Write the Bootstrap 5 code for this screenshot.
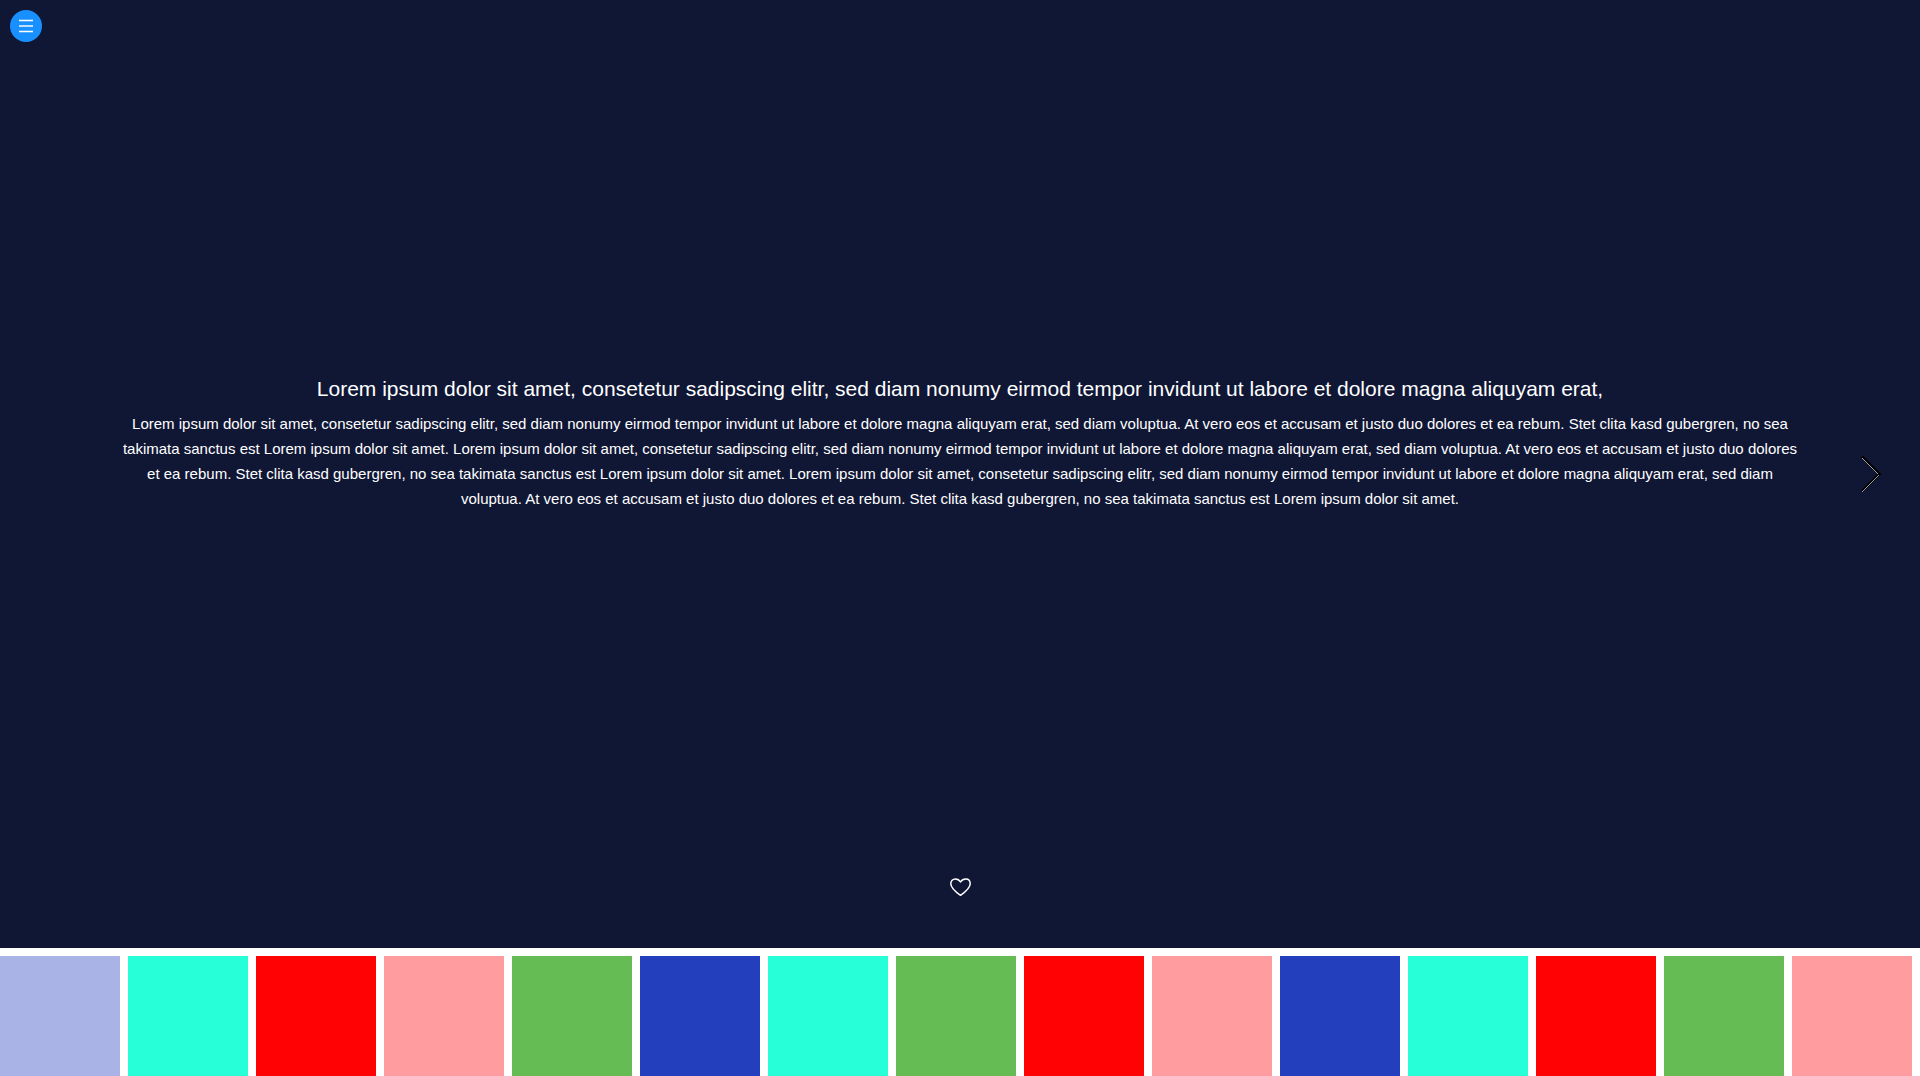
<!DOCTYPE html>
<html lang="en">
<head>
<meta charset="utf-8">
<meta name="viewport" content="width=device-width, initial-scale=1">
<title>Slides</title>
<link href="https://cdn.jsdelivr.net/npm/bootstrap@5.3.0/dist/css/bootstrap.min.css" rel="stylesheet">
<style>
body { font-family: "Liberation Sans", Arial, sans-serif; background: #fff; }
.stage { background: #101735; color: #fff; }
.topbar { padding: 10px; }
.menu-btn, .menu-btn:hover { width: 32px; height: 32px; background: #1890ff; }
.side { width: 120px; }
.side-next { padding-right: 39px; }
.copy { padding-bottom: 42px; }
.copy h1 { font-size: 21px; line-height: 28px; }
.copy p { font-size: 15px; line-height: 25px; }
.foot { height: 50px; }
.tile { width: 120px; height: 120px; }
.tile-mist { background: #a9b3e5; }
.tile-aqua { background: #26ffd8; }
.tile-red { background: #ff0203; }
.tile-pink { background: #ff9c9f; }
.tile-green { background: #66bc54; }
.tile-blue { background: #243fbe; }
</style>
</head>
<body>
<div class="d-flex flex-column min-vh-100">
  <main class="stage flex-grow-1 d-flex flex-column">
    <header class="topbar d-flex">
      <button type="button" class="menu-btn btn rounded-circle border-0 p-0 d-flex align-items-center justify-content-center" aria-label="Menu">
        <svg width="16" height="16" viewBox="0 0 16 16" aria-hidden="true"><path d="M1 2.500h14M1 13.500h14" stroke="#fff" stroke-width="1.300" fill="none"/><path d="M1 8h14" stroke="#fff" stroke-opacity=".85" stroke-width="1.700" fill="none"/></svg>
      </button>
    </header>
    <section class="flex-grow-1 d-flex align-items-stretch">
      <div class="side flex-shrink-0"></div>
      <div class="flex-grow-1 d-flex flex-column align-items-center text-center">
        <div class="copy flex-grow-1 d-flex flex-column justify-content-center">
          <h1 class="fw-normal mb-2">Lorem ipsum dolor sit amet, consetetur sadipscing elitr, sed diam nonumy eirmod tempor invidunt ut labore et dolore magna aliquyam erat,</h1>
          <p class="mb-0">Lorem ipsum dolor sit amet, consetetur sadipscing elitr, sed diam nonumy eirmod tempor invidunt ut labore et dolore magna aliquyam erat, sed diam voluptua. At vero eos et accusam et justo duo dolores et ea rebum. Stet clita kasd gubergren, no sea takimata sanctus est Lorem ipsum dolor sit amet. Lorem ipsum dolor sit amet, consetetur sadipscing elitr, sed diam nonumy eirmod tempor invidunt ut labore et dolore magna aliquyam erat, sed diam voluptua. At vero eos et accusam et justo duo dolores et ea rebum. Stet clita kasd gubergren, no sea takimata sanctus est Lorem ipsum dolor sit amet. Lorem ipsum dolor sit amet, consetetur sadipscing elitr, sed diam nonumy eirmod tempor invidunt ut labore et dolore magna aliquyam erat, sed diam voluptua. At vero eos et accusam et justo duo dolores et ea rebum. Stet clita kasd gubergren, no sea takimata sanctus est Lorem ipsum dolor sit amet.</p>
        </div>
        <button type="button" class="btn border-0 p-0 d-flex" aria-label="Like">
          <svg width="24" height="22" viewBox="0 0 24 22" aria-hidden="true"><path d="M12.500 19.300C8 16.200 2.800 12.300 2.800 7.800C2.800 4.700 4.800 2.900 7.300 2.900C9.800 2.900 11.500 4.200 12.500 6C13.500 4.200 15.500 2.900 17.800 2.900C20.300 2.900 22.200 4.700 22.200 7.800C22.200 12.300 17 16.200 12.500 19.300Z" fill="none" stroke="#fff" stroke-width="1.500" stroke-linejoin="round"/></svg>
        </button>
      </div>
      <div class="side side-next flex-shrink-0 d-flex align-items-center justify-content-end">
        <button type="button" class="btn border-0 p-0 d-flex" aria-label="Next slide">
          <svg width="20" height="40" viewBox="0 0 20 40" aria-hidden="true"><path d="M1 1.500L18.500 19L1 36" fill="none" stroke="#000" stroke-width="2.500"/><path d="M1 3L17 19M1 37L18 20" fill="none" stroke="#a0a0a0" stroke-width="1" shape-rendering="crispEdges"/></svg>
        </button>
      </div>
    </section>
    <div class="foot"></div>
  </main>
  <nav class="d-flex gap-2 pt-2 overflow-hidden" aria-label="Slides">
    <a href="#1" class="tile tile-mist flex-shrink-0" aria-label="Slide 1"></a>
    <a href="#2" class="tile tile-aqua flex-shrink-0" aria-label="Slide 2"></a>
    <a href="#3" class="tile tile-red flex-shrink-0" aria-label="Slide 3"></a>
    <a href="#4" class="tile tile-pink flex-shrink-0" aria-label="Slide 4"></a>
    <a href="#5" class="tile tile-green flex-shrink-0" aria-label="Slide 5"></a>
    <a href="#6" class="tile tile-blue flex-shrink-0" aria-label="Slide 6"></a>
    <a href="#7" class="tile tile-aqua flex-shrink-0" aria-label="Slide 7"></a>
    <a href="#8" class="tile tile-green flex-shrink-0" aria-label="Slide 8"></a>
    <a href="#9" class="tile tile-red flex-shrink-0" aria-label="Slide 9"></a>
    <a href="#10" class="tile tile-pink flex-shrink-0" aria-label="Slide 10"></a>
    <a href="#11" class="tile tile-blue flex-shrink-0" aria-label="Slide 11"></a>
    <a href="#12" class="tile tile-aqua flex-shrink-0" aria-label="Slide 12"></a>
    <a href="#13" class="tile tile-red flex-shrink-0" aria-label="Slide 13"></a>
    <a href="#14" class="tile tile-green flex-shrink-0" aria-label="Slide 14"></a>
    <a href="#15" class="tile tile-pink flex-shrink-0" aria-label="Slide 15"></a>
  </nav>
</div>
<script src="https://cdn.jsdelivr.net/npm/bootstrap@5.3.0/dist/js/bootstrap.bundle.min.js"></script>
</body>
</html>
